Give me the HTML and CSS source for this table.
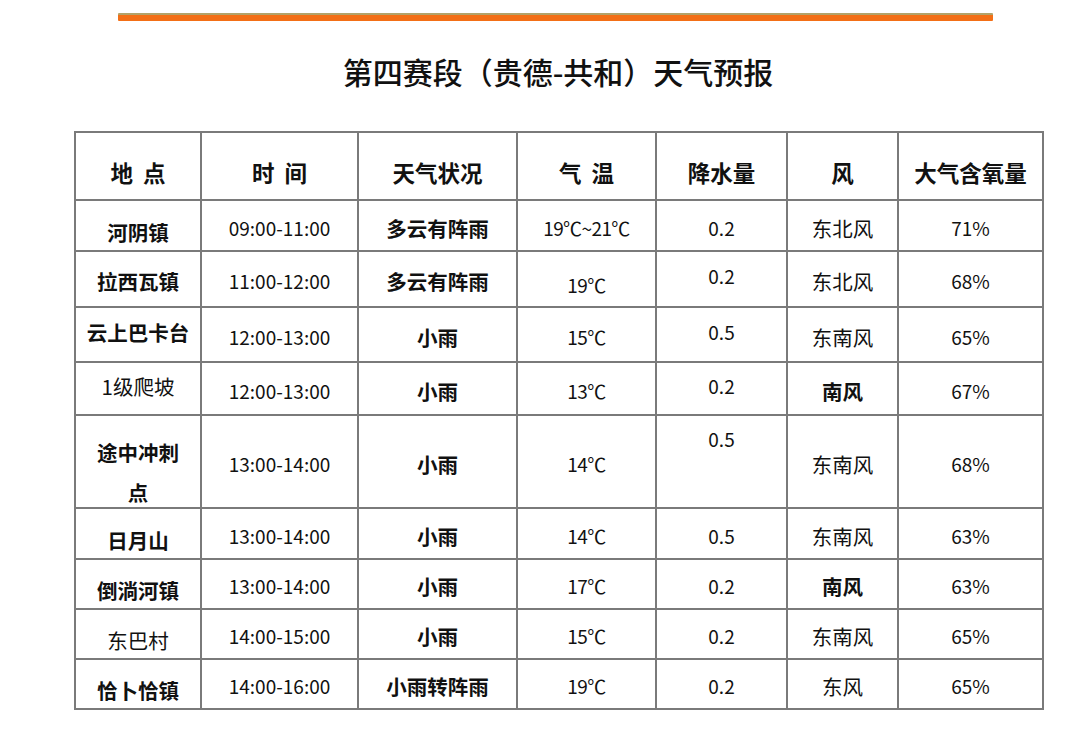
FILE: index.html
```html
<!DOCTYPE html>
<html lang="zh-CN">
<head>
<meta charset="utf-8">
<link rel="stylesheet" href="styles.css">
</head>
<body>
<div class="page">
  <div class="bar"></div>
  <h1 class="title">第四赛段（贵德-共和）天气预报</h1>
  <table class="wx">
    <colgroup>
      <col class="c1"><col class="c2"><col class="c3"><col class="c4"><col class="c5"><col class="c6"><col class="c7">
    </colgroup>
    <thead>
      <tr class="rh">
        <th>地&nbsp;&nbsp;点</th><th>时&nbsp;&nbsp;间</th><th>天气状况</th><th>气&nbsp;&nbsp;温</th><th>降水量</th><th>风</th><th>大气含氧量</th>
      </tr>
    </thead>
    <tbody>
      <tr class="r1">
        <td class="b low">河阴镇</td><td class="n">09:00-11:00</td><td class="b">多云有阵雨</td><td class="n t">19℃~21℃</td><td class="n">0.2</td><td>东北风</td><td class="n">71%</td>
      </tr>
      <tr class="r2">
        <td class="b">拉西瓦镇</td><td class="n">11:00-12:00</td><td class="b">多云有阵雨</td><td class="n t low">19℃</td><td class="n high">0.2</td><td>东北风</td><td class="n">68%</td>
      </tr>
      <tr class="r3">
        <td class="b high">云上巴卡台</td><td class="n">12:00-13:00</td><td class="b">小雨</td><td class="n t">15℃</td><td class="n high">0.5</td><td>东南风</td><td class="n">65%</td>
      </tr>
      <tr class="r4">
        <td class="high">1级爬坡</td><td class="n">12:00-13:00</td><td class="b">小雨</td><td class="n t">13℃</td><td class="n high">0.2</td><td class="b">南风</td><td class="n">67%</td>
      </tr>
      <tr class="r5">
        <td class="b two"><div class="wrap">途中冲刺<br>点</div></td><td class="n">13:00-14:00</td><td class="b">小雨</td><td class="n t">14℃</td><td class="n top">0.5</td><td>东南风</td><td class="n">68%</td>
      </tr>
      <tr class="r6">
        <td class="b low">日月山</td><td class="n">13:00-14:00</td><td class="b">小雨</td><td class="n t">14℃</td><td class="n">0.5</td><td>东南风</td><td class="n">63%</td>
      </tr>
      <tr class="r7">
        <td class="b low">倒淌河镇</td><td class="n">13:00-14:00</td><td class="b">小雨</td><td class="n t">17℃</td><td class="n">0.2</td><td class="b">南风</td><td class="n">63%</td>
      </tr>
      <tr class="r8">
        <td class="low">东巴村</td><td class="n">14:00-15:00</td><td class="b">小雨</td><td class="n t">15℃</td><td class="n">0.2</td><td>东南风</td><td class="n">65%</td>
      </tr>
      <tr class="r9">
        <td class="b low">恰卜恰镇</td><td class="n">14:00-16:00</td><td class="b">小雨转阵雨</td><td class="n t">19℃</td><td class="n">0.2</td><td>东风</td><td class="n">65%</td>
      </tr>
    </tbody>
  </table>
</div>
</body>
</html>
```

FILE: styles.css
```css
html, body {
  margin: 0;
  padding: 0;
  background: #ffffff;
}

body {
  font-family: "Noto Sans CJK SC", "Noto Sans", sans-serif;
  color: #111111;
}

.page {
  width: 968px;
  margin-left: 74px;
  padding-top: 13px;
}

.bar {
  margin-left: 44px;
  width: 875px;
  height: 8px;
  box-sizing: border-box;
  border-top: 2px solid #b2a36a;
  background: #f36f16;
  border-radius: 1px;
}

.title {
  margin: 26px 0 0 0;
  height: 84px;
  text-align: center;
  font-size: 30px;
  font-weight: 500;
  line-height: 48px;
  color: #111111;
}

.wx {
  border-collapse: collapse;
  table-layout: fixed;
  width: 968px;
  font-size: 20.5px;
}

.c1 { width: 126px; }
.c2 { width: 157px; }
.c3 { width: 159px; }
.c4 { width: 139px; }
.c5 { width: 131px; }
.c6 { width: 111px; }
.c7 { width: 145px; }

.wx th, .wx td {
  border: 2px solid #7a7a7a;
  text-align: center;
  vertical-align: middle;
  padding: 0 4px;
  line-height: 26px;
  font-weight: 400;
  color: #111111;
}

.wx th {
  font-weight: 700;
  font-size: 22.5px;
  padding-top: 12px;
}

.wx td.b { font-weight: 700; }
.wx td.n { font-size: 19px; }
.wx td.t { letter-spacing: -0.6px; }

.rh { height: 68px; }
.r1 { height: 51px; }
.r2 { height: 56px; }
.r3 { height: 55px; }
.r4 { height: 53px; }
.r5 { height: 93px; }
.r6 { height: 51px; }
.r7 { height: 50px; }
.r8 { height: 50px; }
.r9 { height: 50px; }

.wx td { padding-top: 4px; }
.wx td.low { padding-top: 12px; }
.wx td.high { padding-top: 0; padding-bottom: 6px; }
.wx td.top { vertical-align: top; padding-top: 10px; }
.wx td.two { line-height: 40px; padding: 16px 4px 0 4px; vertical-align: top; }
.wrap { margin-bottom: -12px; }
```
